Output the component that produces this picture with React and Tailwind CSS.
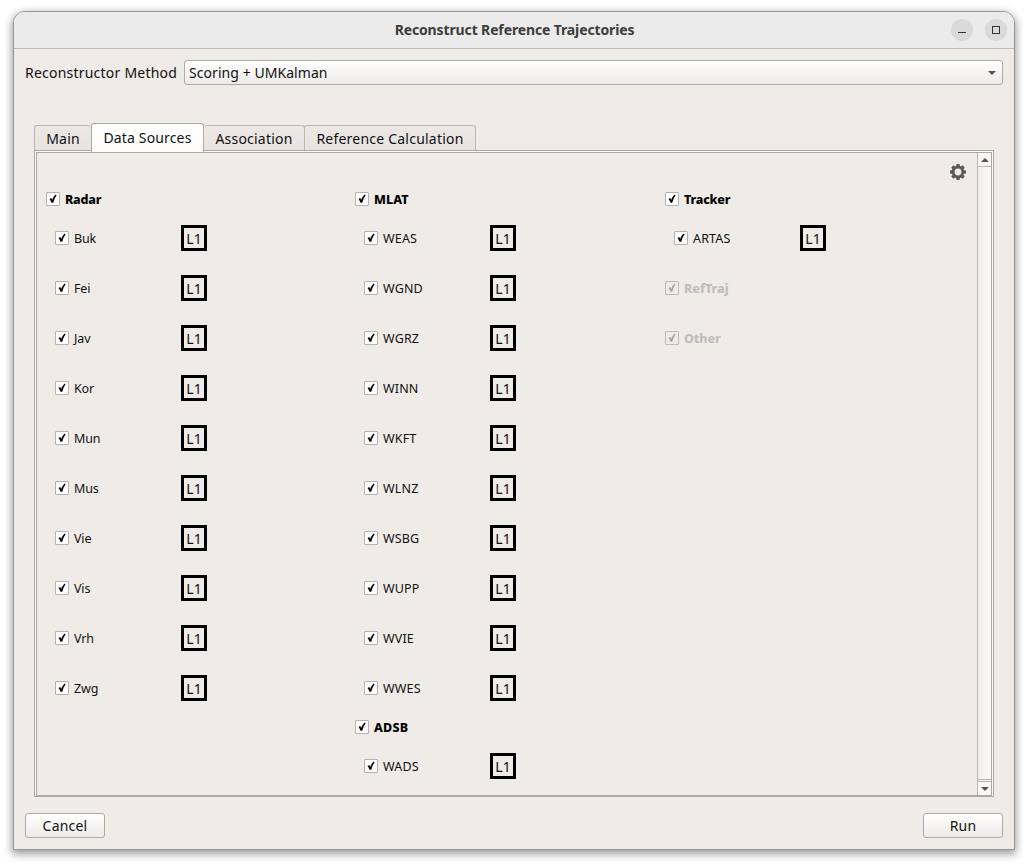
import React from "react";

function Check({ disabled }) {
  return (
    <span
      className={
        "flex h-3.5 w-3.5 shrink-0 items-center justify-center rounded-[1px] border " +
        (disabled ? "border-[#bebab6] bg-[#efebe7] text-[#a5a2a0]" : "border-[#b6b2ae] bg-white text-black")
      }
    >
      <svg width="12" height="12" viewBox="0 0 12 12" fill="currentColor">
        <path d="M2.5 6 4.3 5.1 5.2 6.9 C6 4.9 7 3.1 8.7 1.6 L9.6 2.2 C8 4.4 7 6.7 6.3 9.8 L4.5 9.8 C4 8.3 3.4 7.1 2.5 6Z" />
      </svg>
    </span>
  );
}

function Group({ name, tracking, disabled, tall }) {
  return (
    <div className={"flex items-center gap-[5px] " + (tall ? "h-[50px]" : "h-7")}>
      <Check disabled={disabled} />
      <span className={"pt-px text-[12.5px] leading-4 font-extrabold " + tracking + (disabled ? " text-[#bebebe]" : " text-black")}>
        {name}
      </span>
    </div>
  );
}

function Source({ name }) {
  const caps = name === name.toUpperCase();
  return (
    <div className="flex h-[50px] items-center pl-[9px]">
      <Check />
      <span
        className={"ml-[5px] w-[107px] pt-0.5 text-[12.5px] leading-4 " + (caps ? "tracking-[0.15px]" : "tracking-[-0.15px]")}
      >
        {name}
      </span>
      <span className="flex h-[26px] w-[26px] items-center justify-center border-[3px] border-black pt-0.5 text-[14px] leading-4">
        L1
      </span>
    </div>
  );
}

const RADARS = ["Buk", "Fei", "Jav", "Kor", "Mun", "Mus", "Vie", "Vis", "Vrh", "Zwg"];
const MLATS = ["WEAS", "WGND", "WGRZ", "WINN", "WKFT", "WLNZ", "WSBG", "WUPP", "WVIE", "WWES"];

function Arrow({ up }) {
  return (
    <svg width="8" height="4" viewBox="0 0 8 4" fill="#555250">
      <path d={up ? "M0 4 4 0 8 4Z" : "M0 0 4 4 8 0Z"} />
    </svg>
  );
}

function Tab({ children, className }) {
  return (
    <div
      className={
        "flex h-[26px] items-center justify-center rounded-t-[3px] border border-b-0 border-[#bab6b2] bg-linear-to-b from-[#ece8e5] to-[#e7e3e0] tracking-[0.22px] " +
        className
      }
    >
      {children}
    </div>
  );
}

function Button({ children }) {
  return (
    <button className="flex h-[25px] w-20 items-center justify-center rounded-[3px] border border-[#aeaaa7] bg-linear-to-b from-white to-[#edebe9] tracking-[0.2px]">
      {children}
    </button>
  );
}

export default function App() {
  return (
    <div className="h-[866px] w-[1028px] bg-white pt-[11px] pl-[13px] font-['Noto_Sans',sans-serif] text-[14px] leading-5 whitespace-nowrap text-[#111]">
      <div className="flex h-[839px] w-[1002px] flex-col overflow-hidden rounded-t-[12px] border border-[#989694] bg-[#efebe7] shadow-[0_3px_8px_1px_rgba(0,0,0,0.4)]">
        <header className="flex h-[37px] shrink-0 items-center border-b border-[#bfbdbb] bg-[#ebebeb] pr-[7px] pl-16">
          <h1 className="flex-1 text-center text-[14px] font-bold tracking-[-0.13px] text-[#3d3d3d]">
            Reconstruct Reference Trajectories
          </h1>
          <div className="flex gap-3">
            <span className="flex h-[22px] w-[22px] items-center justify-center rounded-full bg-[#dadada]">
              <span className="mt-1 h-px w-2 bg-[#333]" />
            </span>
            <span className="flex h-[22px] w-[22px] items-center justify-center rounded-full bg-[#dadada]">
              <span className="h-2 w-2 border border-[#333]" />
            </span>
          </div>
        </header>

        <div className="mt-[11px] flex h-[25px] shrink-0 items-center px-[11px]">
          <label className="w-[159px] tracking-[0.22px]">Reconstructor Method</label>
          <div className="flex h-[25px] flex-1 items-center justify-between rounded-[3px] border border-[#aeaaa7] bg-linear-to-b from-white to-[#edebe9] pr-1.5 pl-1">
            <span className="tracking-[0.06px]">Scoring + UMKalman</span>
            <Arrow />
          </div>
        </div>

        <div className="mt-[38px] ml-5 flex h-7 shrink-0 items-end">
          <Tab className="w-[57px] border-r-0">Main</Tab>
          <div className="z-10 -mb-px flex h-[29px] w-[113px] items-center justify-center rounded-t-[3px] border border-b-0 border-[#aeaaa7] bg-linear-to-b from-white to-[#fcfbfa] tracking-[0.15px]">
            Data Sources
          </div>
          <Tab className="w-[101px] border-l-0">Association</Tab>
          <Tab className="-ml-px w-[172px]">Reference Calculation</Tab>
        </div>
        <div className="-mt-px ml-5 h-[647px] w-[960px] shrink-0 border border-[#aca8a5] bg-[#fafaf9] p-px pb-0">
          <div className="flex h-full border border-[#aca8a5] bg-[#efebe7]">
            <div className="grid flex-1 grid-cols-[309px_310px_1fr] content-start pt-8 pl-[9px]">
              <div>
                <Group name="Radar" tracking="tracking-[-0.2px]" />
                {RADARS.map((n) => (
                  <Source key={n} name={n} />
                ))}
              </div>
              <div>
                <Group name="MLAT" tracking="tracking-[0.1px]" />
                {MLATS.map((n) => (
                  <Source key={n} name={n} />
                ))}
                <Group name="ADSB" tracking="tracking-[0.2px]" />
                <Source name="WADS" />
              </div>
              <div className="relative">
                <Group name="Tracker" tracking="tracking-[-0.2px]" />
                <Source name="ARTAS" />
                <Group name="RefTraj" tracking="tracking-[0px]" disabled tall />
                <Group name="Other" tracking="tracking-[-0.1px]" disabled tall />
                <svg className="absolute -top-[21px] right-[11px]" width="16" height="16" viewBox="-8 -8 16 16">
                  <g fill="#5b5957">
                    <path
                      fillRule="evenodd"
                      d="M0-6.2A6.2 6.2 0 1 1 0 6.2 6.2 6.2 0 1 1 0-6.2ZM0-3.4A3.4 3.4 0 1 0 0 3.4 3.4 3.4 0 1 0 0-3.4Z"
                    />
                    {[0, 45, 90, 135, 180, 225, 270, 315].map((a) => (
                      <path key={a} d="M-2-5.5-1.5-8H1.5L2-5.5Z" transform={`rotate(${a})`} />
                    ))}
                  </g>
                </svg>
              </div>
            </div>
            <div className="flex w-[14px] flex-col border-l border-[#bab6b3] bg-linear-to-r from-[#f0eeec] to-[#fcfcfb]">
              <div className="flex h-3.5 items-center justify-center border-b border-[#bab6b3] bg-[#f9f8f7]">
                <Arrow up />
              </div>
              <div className="flex-1" />
              <div className="h-[3px] border-y border-[#bab6b3]" />
              <div className="flex h-[13px] items-center justify-center bg-[#f9f8f7]">
                <Arrow />
              </div>
            </div>
          </div>
        </div>

        <footer className="mt-4 flex justify-between px-[11px]">
          <Button>Cancel</Button>
          <Button>Run</Button>
        </footer>
      </div>
    </div>
  );
}
